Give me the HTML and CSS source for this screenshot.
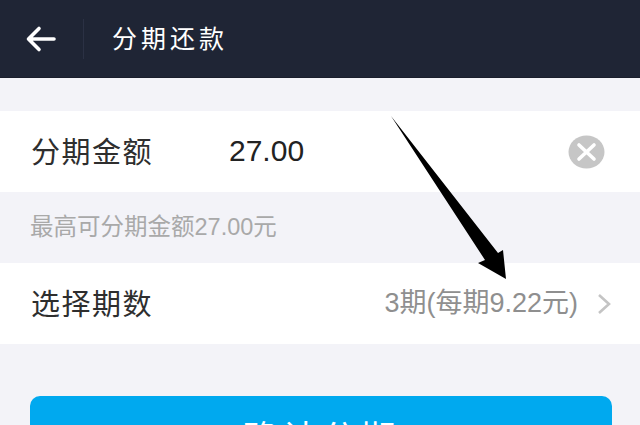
FILE: index.html
```html
<!DOCTYPE html>
<html lang="zh">
<head>
<meta charset="utf-8">
<title>分期还款</title>
<link rel="stylesheet" href="styles.css">
</head>
<body>
<div class="page">
  <header class="topbar">
    <svg class="back" width="32" height="28" viewBox="0 0 32 28"><path d="M29 14H4M14 3.500L3.500 14 14 24.500" fill="none" stroke="#fff" stroke-width="3.600" stroke-linecap="round" stroke-linejoin="round"/></svg>
    <span class="divider"></span>
    <h1 class="title">分期还款</h1>
  </header>
  <section class="row row-amount">
    <span class="label">分期金额</span>
    <span class="amount">27.00</span>
    <svg class="clear" width="37" height="34" viewBox="0 0 37 34"><ellipse cx="18.500" cy="17" rx="18" ry="16.500" fill="#c6c6c6"/><path d="M11 10l15 14M26 10L11 24" stroke="#fff" stroke-width="3.600" stroke-linecap="round"/></svg>
  </section>
  <p class="hint">最高可分期金额27.00元</p>
  <section class="row row-term">
    <span class="label">选择期数</span>
    <span class="term">3期(每期9.22元)</span>
    <svg class="chev" width="16" height="22" viewBox="0 0 16 22"><path d="M3 2l10 9-10 9" fill="none" stroke="#c4c4c4" stroke-width="2.600"/></svg>
  </section>
  <div class="action"><button class="confirm">确认分期</button></div>
</div>
<svg class="arrow" width="120" height="166" viewBox="0 0 120 166"><path d="M1 0L108 137 113 134 116 163 88 147 95 144Z" fill="#000"/></svg>
</body>
</html>
```
FILE: styles.css
```css
html, body { margin: 0; padding: 0; }
body { width: 640px; height: 425px; overflow: hidden; position: relative; background: #f3f3f8; font-family: "Liberation Sans", "Noto Sans CJK SC", sans-serif; }
.page { display: flex; flex-direction: column; height: 425px; overflow: hidden; }
.topbar { height: 78px; box-sizing: border-box; background: #1f2535; border-bottom: 1px solid #1a1e2c; display: flex; align-items: center; padding-left: 25px; flex: none; }
.back { flex: none; }
.divider { width: 1px; height: 40px; background: #2b3144; margin-left: 26px; }
.title { margin: 0 0 4px 28px; font-size: 25px; font-weight: 400; color: #fff; letter-spacing: 4px; font-family: "Noto Sans CJK SC", sans-serif; }
.row { background: #fff; display: flex; align-items: center; flex: none; }
.row-amount { height: 81px; margin-top: 33px; padding: 0 35px 0 31px; }
.row-term { height: 81px; padding: 0 28px 0 31px; }
.label { font-size: 29px; color: #2e2e2e; width: 198px; letter-spacing: 1.500px; flex: none; padding-bottom: 3px; font-family: "Noto Sans CJK SC", sans-serif; }
.amount { font-size: 30px; color: #222; flex: 1; padding-bottom: 2px; }
.clear { flex: none; }
.hint { margin: 0; height: 71px; box-sizing: border-box; padding: 0 0 5px 30px; display: flex; align-items: center; font-size: 23.500px; color: #a9a9a9; flex: none; }
.term { margin-left: auto; font-size: 27px; color: #8f8f8f; padding-bottom: 6px; }
.chev { margin-left: 18px; flex: none; }
.action { padding: 52px 28px 0 30px; flex: none; }
.confirm { display: block; width: 100%; height: 90px; border: 0; border-radius: 10px; background: #00a9ef; color: #fff; font-size: 36px; font-family: "Noto Sans CJK SC", sans-serif; padding: 0 0 10px 0; letter-spacing: 3px; }
.arrow { position: absolute; left: 390px; top: 116px; }
```
